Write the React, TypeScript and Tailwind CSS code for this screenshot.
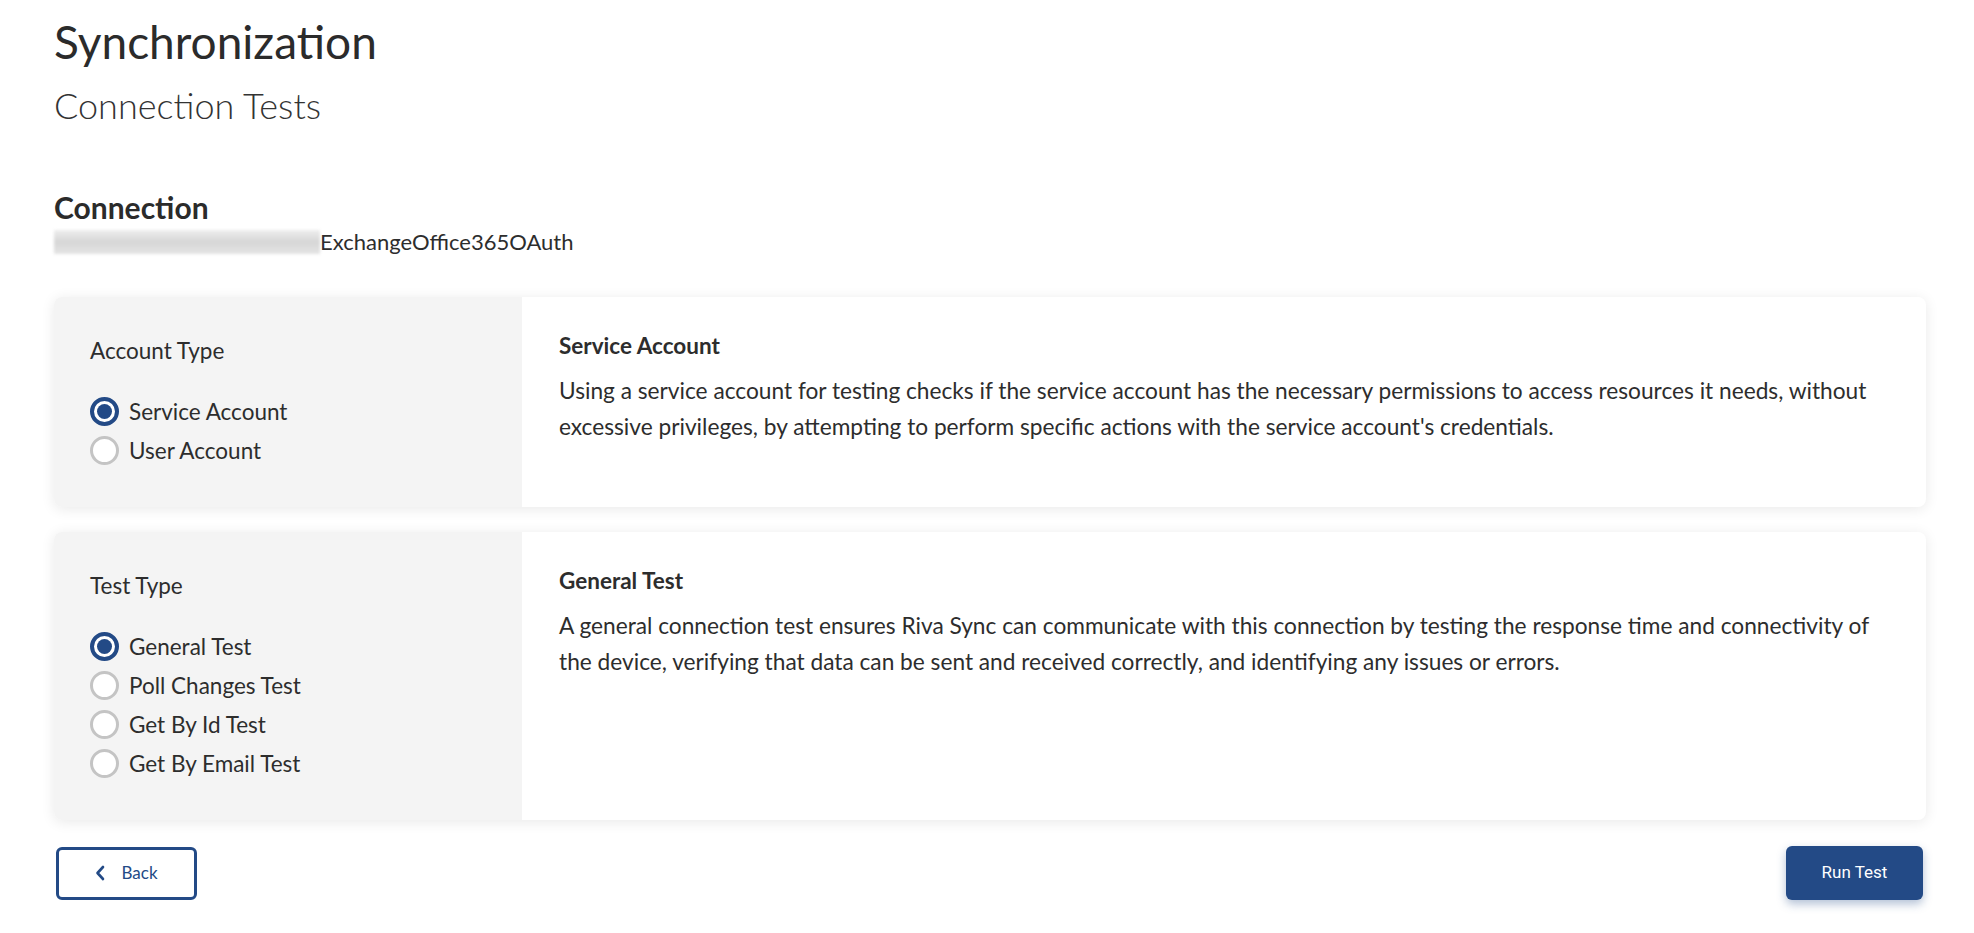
import React, { useState } from 'react'

// Types
interface Option {
  id: string
  label: string
  title: string
  description: string
}

const accountTypes: Option[] = [
  {
    id: 'service',
    label: 'Service Account',
    title: 'Service Account',
    description:
      "Using a service account for testing checks if the service account has the necessary permissions to access resources it needs, without excessive privileges, by attempting to perform specific actions with the service account's credentials.",
  },
  {
    id: 'user',
    label: 'User Account',
    title: 'User Account',
    description:
      "Using a user account for testing checks if a regular user can reach the resources of this connection with their own credentials and permissions.",
  },
]

const testTypes: Option[] = [
  {
    id: 'general',
    label: 'General Test',
    title: 'General Test',
    description:
      'A general connection test ensures Riva Sync can communicate with this connection by testing the response time and connectivity of the device, verifying that data can be sent and received correctly, and identifying any issues or errors.',
  },
  {
    id: 'poll',
    label: 'Poll Changes Test',
    title: 'Poll Changes Test',
    description: 'A poll changes test checks that Riva Sync can detect new, changed and deleted items on this connection.',
  },
  {
    id: 'byId',
    label: 'Get By Id Test',
    title: 'Get By Id Test',
    description: 'A get by id test retrieves a single item from this connection using its unique identifier.',
  },
  {
    id: 'byEmail',
    label: 'Get By Email Test',
    title: 'Get By Email Test',
    description: 'A get by email test looks up a mailbox on this connection using its email address.',
  },
]

const RadioOption: React.FC<{ checked: boolean; label: string; onSelect: () => void }> = ({
  checked,
  label,
  onSelect,
}) => (
  <button type="button" onClick={onSelect} className="flex h-[39px] items-center gap-[10px] text-left">
    {checked ? (
      <span className="flex h-[29px] w-[29px] items-center justify-center rounded-full border-[4px] border-[#234a86] bg-white">
        <span className="h-[15px] w-[15px] rounded-full bg-[#234a86]" />
      </span>
    ) : (
      <span className="h-[29px] w-[29px] rounded-full border-[3px] border-[#c4c4c4] bg-white" />
    )}
    <span className="text-[22.5px] text-[#2d2d2d]">{label}</span>
  </button>
)

const OptionCard: React.FC<{
  heading: string
  options: Option[]
  selected: string
  onSelect: (id: string) => void
}> = ({ heading, options, selected, onSelect }) => {
  const current = options.find(o => o.id === selected) || options[0]
  return (
    <div className="flex overflow-hidden rounded-[8px] bg-white shadow-[0_2px_14px_rgba(0,0,0,0.09)]">
      {/* Selector */}
      <div className="w-1/4 shrink-0 bg-[#f4f4f4] px-[36px] pb-[37px] pt-[38px]">
        <div className="text-[22.5px] leading-[32px] text-[#2d2d2d]">{heading}</div>
        <div className="mt-[25px] flex flex-col">
          {options.map(o => (
            <RadioOption key={o.id} checked={o.id === selected} label={o.label} onSelect={() => onSelect(o.id)} />
          ))}
        </div>
      </div>

      {/* Description */}
      <div className="flex-1 px-[37px] pt-[33px]">
        <div className="text-[22.5px] font-bold leading-[32px] text-[#2d2d2d]">{current.title}</div>
        <p className="mt-[11px] text-[22.7px] leading-[36px] text-[#2d2d2d]">{current.description}</p>
      </div>
    </div>
  )
}

export default function App() {
  const [account, setAccount] = useState('service')
  const [test, setTest] = useState('general')

  return (
    <div className="min-h-screen bg-white pl-[54px] pr-[48px] pt-[12px] font-['Lato','Liberation_Sans',sans-serif] text-[#2d2d2d]">
      {/* Page header */}
      <h1 className="text-[46px] leading-[60px] text-[#2b2b2b]">Synchronization</h1>
      <h2 className="mt-[10px] text-[36px] font-light leading-[46px] text-[#333]">Connection Tests</h2>

      {/* Connection */}
      <div className="mt-[61px]">
        <h3 className="text-[30px] font-bold leading-[36px] text-[#2b2b2b]">Connection</h3>
        <div className="flex items-center">
          <div className="h-[24px] w-[266px] bg-gradient-to-b from-[#eeeeee] via-[#d6d6d6] to-[#e4e4e4] blur-[1.5px]" />
          <span className="text-[22px] leading-[34px] text-[#2d2d2d]">ExchangeOffice365OAuth</span>
        </div>
      </div>

      {/* Options */}
      <div className="mt-[38px] flex flex-col gap-[25px]">
        <OptionCard heading="Account Type" options={accountTypes} selected={account} onSelect={setAccount} />
        <OptionCard heading="Test Type" options={testTypes} selected={test} onSelect={setTest} />
      </div>

      {/* Actions */}
      <div className="mt-[26px] flex items-center justify-between pl-[2px] pr-[3px]">
        <button
          type="button"
          className="flex h-[53px] w-[141px] items-center justify-center gap-[16px] rounded-[6px] border-[3px] border-[#234a86] bg-white text-[17px] text-[#234a86]"
        >
          <svg width="10" height="16" viewBox="0 0 10 16" fill="none">
            <path d="M8 2L2.5 8L8 14" stroke="#234a86" strokeWidth="2.6" strokeLinecap="round" strokeLinejoin="round" />
          </svg>
          Back
        </button>
        <button
          type="button"
          className="h-[54px] w-[137px] rounded-[6px] bg-[#234a86] font-['Roboto',sans-serif] text-[17px] text-white shadow-[0_4px_10px_rgba(35,74,134,0.35)]"
        >
          Run Test
        </button>
      </div>
    </div>
  )
}
